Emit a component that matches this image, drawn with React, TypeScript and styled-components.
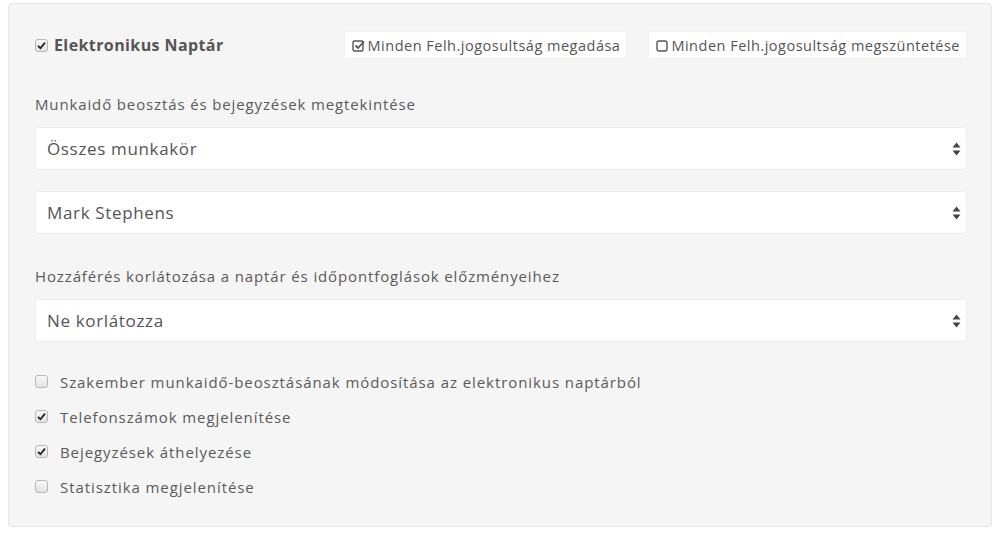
import * as React from "react";
import styled, { createGlobalStyle } from "styled-components";

const GlobalStyle = createGlobalStyle`
  html, body {
    margin: 0;
    padding: 0;
    background: #fff;
  }
  body {
    font-family: "Open Sans", "Liberation Sans", sans-serif;
    color: #555;
  }
`;

const Well = styled.div`
  box-sizing: border-box;
  margin: 3px 8px 0 8px;
  height: 524px;
  padding: 27px 24px 0 26px;
  background: #f5f5f5;
  border: 1px solid #e6e6e6;
  border-radius: 4px;
  box-shadow: 0 1px 1px rgba(0, 0, 0, 0.03);
`;

const HeaderRow = styled.div`
  display: flex;
  align-items: center;
  height: 28px;
`;

const Title = styled.label`
  display: flex;
  align-items: center;
  gap: 6px;
  flex: 1;
  font-size: 16px;
  font-weight: 700;
  letter-spacing: 0.4px;
  color: #555;
`;

const ToolButton = styled.button`
  display: flex;
  align-items: center;
  gap: 3px;
  height: 28px;
  padding: 0 6px 0 7px;
  margin-left: 21px;
  background: #fff;
  border: 1px solid #f0f0f0;
  border-radius: 2px;
  font-family: inherit;
  font-size: 14.5px;
  letter-spacing: 0.5px;
  color: #555;
  white-space: nowrap;
`;

const Label = styled.div<{ $top: number }>`
  margin: ${(p) => p.$top}px 0 13px;
  font-size: 15px;
  letter-spacing: 0.87px;
  line-height: 20px;
  color: #5a5a5a;
`;

const SelectBox = styled.div<{ $gap?: number }>`
  box-sizing: border-box;
  display: flex;
  align-items: center;
  justify-content: space-between;
  height: 43px;
  padding: 0 5px 0 11px;
  margin-top: ${(p) => p.$gap ?? 0}px;
  background: #fff;
  border: 1px solid #ededed;
  border-radius: 2px;
  font-size: 17px;
  letter-spacing: 0.65px;
  color: #555;
`;

const CheckList = styled.div`
  margin-top: 29px;
  display: flex;
  flex-direction: column;
  gap: 14px;
`;

const CheckRow = styled.label`
  display: flex;
  align-items: center;
  gap: 12px;
  height: 21px;
  font-size: 15px;
  letter-spacing: 0.92px;
  color: #5a5a5a;
`;

const Box = styled.span`
  box-sizing: border-box;
  flex: none;
  display: flex;
  align-items: center;
  justify-content: center;
  width: 13px;
  height: 13px;
  border: 1px solid #b8b8b8;
  border-radius: 3px;
  background: linear-gradient(#f8f8f8, #e2e2e2);
`;

const Arrows = () => (
  <svg width="9" height="14" viewBox="0 0 9 14">
    <path d="M4.5 0.5 L8.5 5.5 H0.5 Z" fill="#444" />
    <path d="M4.5 13.5 L8.5 8.5 H0.5 Z" fill="#444" />
  </svg>
);

const Check = ({ checked }: { checked?: boolean }) => (
  <Box>
    {checked && (
      <svg width="9" height="9" viewBox="0 0 9 9">
        <path d="M1 4.8 L3.4 7.2 L8 1.6" stroke="#222" strokeWidth="1.8" fill="none" />
      </svg>
    )}
  </Box>
);

const CheckSquareIcon = () => (
  <svg width="13" height="13" viewBox="0 0 13 13">
    <rect x="1" y="2" width="10" height="10" rx="1.5" fill="none" stroke="#555" strokeWidth="1.4" />
    <path d="M3.5 6.5 L6 9 L12 2.5" stroke="#555" strokeWidth="1.8" fill="none" />
  </svg>
);

const SquareIcon = () => (
  <svg width="12" height="13" viewBox="0 0 12 13">
    <rect x="1" y="2" width="10" height="10" rx="2" fill="none" stroke="#555" strokeWidth="1.4" />
  </svg>
);

const options = [
  { text: "Szakember munkaidő-beosztásának módosítása az elektronikus naptárból", checked: false },
  { text: "Telefonszámok megjelenítése", checked: true },
  { text: "Bejegyzések áthelyezése", checked: true },
  { text: "Statisztika megjelenítése", checked: false },
];

export default function App() {
  return (
    <>
      <GlobalStyle />
      <Well>
        <HeaderRow>
          <Title>
            <Check checked />
            Elektronikus Naptár
          </Title>
          <ToolButton>
            <CheckSquareIcon />
            Minden Felh.jogosultság megadása
          </ToolButton>
          <ToolButton>
            <SquareIcon />
            Minden Felh.jogosultság megszüntetése
          </ToolButton>
        </HeaderRow>

        <Label $top={35}>Munkaidő beosztás és bejegyzések megtekintése</Label>
        <SelectBox>
          Összes munkakör
          <Arrows />
        </SelectBox>
        <SelectBox $gap={21}>
          Mark Stephens
          <Arrows />
        </SelectBox>

        <Label $top={32}>Hozzáférés korlátozása a naptár és időpontfoglások előzményeihez</Label>
        <SelectBox>
          Ne korlátozza
          <Arrows />
        </SelectBox>

        <CheckList>
          {options.map((o) => (
            <CheckRow key={o.text}>
              <Check checked={o.checked} />
              {o.text}
            </CheckRow>
          ))}
        </CheckList>
      </Well>
    </>
  );
}
